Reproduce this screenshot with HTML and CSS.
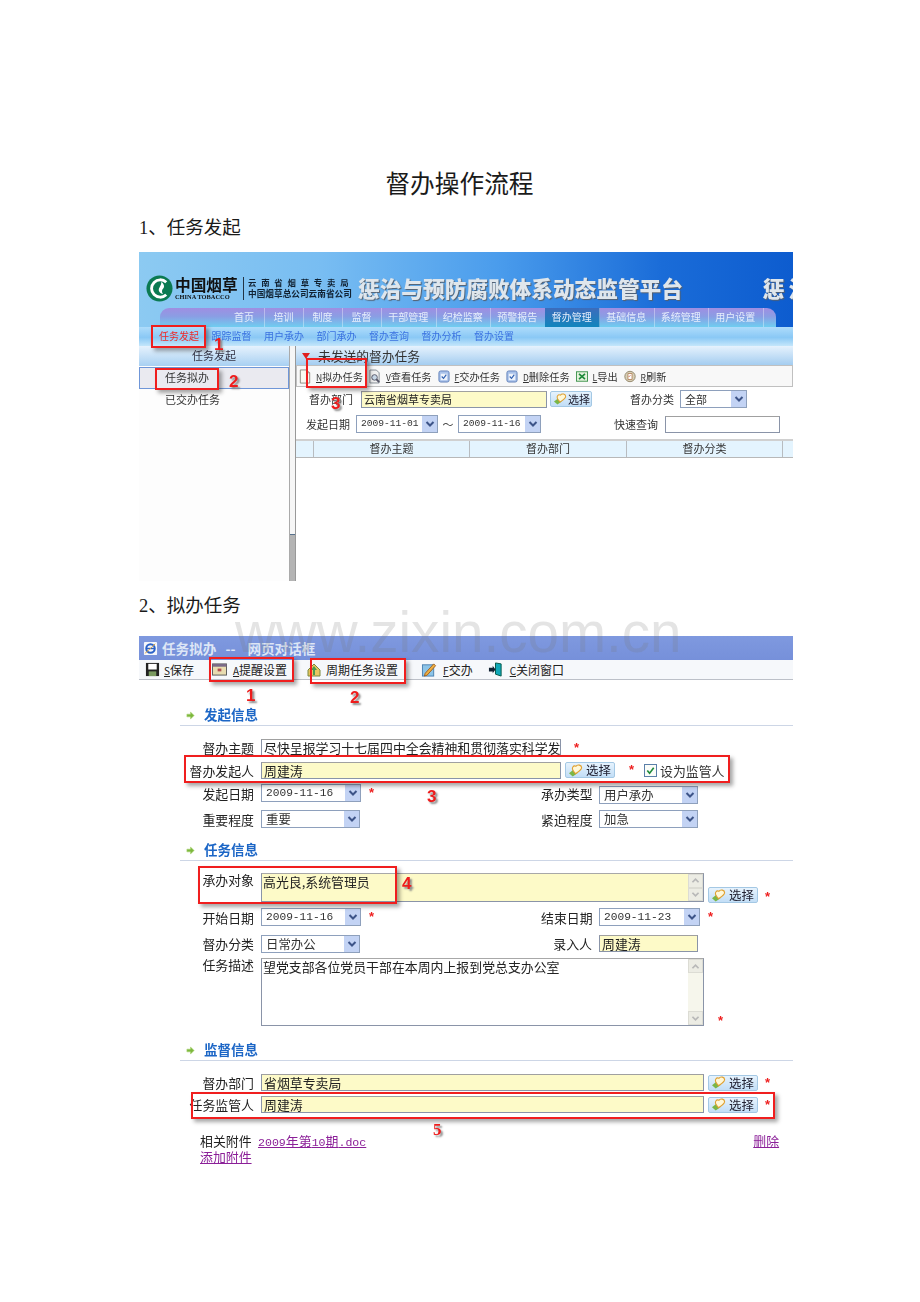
FILE: index.html
```html
<!DOCTYPE html>
<html lang="zh-CN">
<head>
<meta charset="utf-8">
<title>督办操作流程</title>
<link rel="stylesheet" href="styles.css">
</head>
<body>
<svg class="defs" width="0" height="0" aria-hidden="true">
  <symbol id="pick" viewBox="0 0 16 14"><path d="M1 10l5-4 4 4-5 3.500z" fill="#7ab648"/><path d="M6 8C3 4 6 1 8.500 2.500 10 0 15 1 14.500 4.500 14 7 10 9 8 10.500z" fill="#fff8d8" stroke="#e0a030" stroke-width="1.200"/></symbol>
  <symbol id="chev" viewBox="0 0 10 8"><path d="M1.500 2L5 5.500 8.500 2" fill="none" stroke="currentColor" stroke-width="2"/></symbol>
  <symbol id="doc" viewBox="0 0 12 16"><path d="M1 1h7l3 3v11H1z" fill="#fafaf2" stroke="#8a8a80"/><path d="M8 1v3h3" fill="#ddd" stroke="#8a8a80"/></symbol>
  <symbol id="view" viewBox="0 0 13 16"><path d="M1 1h7l3 3v11H1z" fill="#f0f0f0" stroke="#808890"/><circle cx="6" cy="9" r="3" fill="#c8d8e8" stroke="#556"/><path d="M8 11l3 3" stroke="#556" stroke-width="2"/></symbol>
  <symbol id="task" viewBox="0 0 13 14"><rect x="1" y="1" width="11" height="12" rx="2" fill="#a9c2ea" stroke="#5f7fb8"/><rect x="3" y="4" width="7" height="7" fill="#eef3fb"/><path d="M4 7l2 2 3-4" fill="none" stroke="#3060b0" stroke-width="1.200"/></symbol>
  <symbol id="xls" viewBox="0 0 14 14"><rect x=".5" y="1.500" width="13" height="11" fill="#e4f2dc" stroke="#2e8b3e"/><path d="M3.500 4l7 6M10.500 4l-7 6" stroke="#1e8a3a" stroke-width="2"/></symbol>
  <symbol id="ref" viewBox="0 0 15 15"><circle cx="7.500" cy="7.500" r="6.500" fill="#d8d0b8" stroke="#87795a"/><rect x="5" y="4" width="5" height="7" fill="#fff" stroke="#a06030" stroke-width=".8"/><path d="M6 8l2-2" stroke="#c04020"/></symbol>
  <symbol id="arrow" viewBox="0 0 10 10"><path d="M5 1l4 4-4 4V6.500H1v-3h4z" fill="#7cb83c" stroke="#a8d070" stroke-width=".6"/></symbol>
</svg>

<main class="doc">
  <h1 class="doc-title">督办操作流程</h1>
  <h2 class="step">1、任务发起</h2>

  <section class="shot shot-a">
    <header class="brand">
      <div class="brand-top">
        <svg class="logo" viewBox="0 0 28 28"><circle cx="14" cy="14" r="13.500" fill="#0b7a52"/><path d="M21 7.500A9 9 0 1 0 21 20.500" fill="none" stroke="#fff" stroke-width="3"/><path d="M16 7c4 4 3 6 1 8-1 2 0 4 1 5-4-1-6-4-4-7 1-2 2-4 2-6z" fill="#fff"/></svg>
        <div class="logo-cn">
          <div class="logo-big">中国烟草</div>
          <div class="logo-en">CHINA TOBACCO</div>
        </div>
        <div class="logo-sub">
          <div class="logo-l1">云南省烟草专卖局</div>
          <div class="logo-l2">中国烟草总公司云南省公司</div>
        </div>
        <div class="sys-title">惩治与预防腐败体系动态监管平台</div>
        <div class="sys-title sys-repeat">惩治</div>
      </div>
      <nav class="nav">
        <a class="nav-i nav-first">首页</a><a class="nav-i nav-s">培训</a><a class="nav-i nav-s">制度</a><a class="nav-i nav-s">监督</a><a class="nav-i">干部管理</a><a class="nav-i">纪检监察</a><a class="nav-i">预警报告</a><a class="nav-i nav-on">督办管理</a><a class="nav-i">基础信息</a><a class="nav-i">系统管理</a><a class="nav-i">用户设置</a>
      </nav>
    </header>
    <div class="subnav"><a class="sub-on">任务发起</a><a>跟踪监督</a><a>用户承办</a><a>部门承办</a><a>督办查询</a><a>督办分析</a><a>督办设置</a></div>
    <div class="split">
      <aside class="side">
        <div class="side-head">任务发起</div>
        <div class="side-item side-sel">任务拟办</div>
        <div class="side-item">已交办任务</div>
      </aside>
      <div class="splitter"><div class="split-grip"></div></div>
      <div class="pane">
        <div class="pane-head"><span class="tri"></span>未发送的督办任务</div>
        <div class="tools">
          <svg class="ti"><use href="#doc"/></svg><span class="tt"><u>N</u>拟办任务</span>
          <svg class="ti"><use href="#view"/></svg><span class="tt"><u>V</u>查看任务</span>
          <svg class="ti"><use href="#task"/></svg><span class="tt"><u>F</u>交办任务</span>
          <svg class="ti"><use href="#task"/></svg><span class="tt"><u>D</u>删除任务</span>
          <svg class="ti"><use href="#xls"/></svg><span class="tt"><u>L</u>导出</span>
          <svg class="ti"><use href="#ref"/></svg><span class="tt"><u>R</u>刷新</span>
        </div>
        <div class="filter f1">
          <span class="flabel">督办部门</span>
          <div class="inp yellow f-dept">云南省烟草专卖局</div>
          <button class="pick pick-s"><svg class="pick-ic"><use href="#pick"/></svg>选择</button>
          <span class="flabel f-cat">督办分类</span>
          <div class="sel f-catsel"><span class="val">全部</span><span class="arr"><svg><use href="#chev"/></svg></span></div>
        </div>
        <div class="filter f2">
          <span class="flabel">发起日期</span>
          <div class="sel f-date"><span class="val mono">2009-11-01</span><span class="arr"><svg><use href="#chev"/></svg></span></div>
          <span class="tilde">～</span>
          <div class="sel f-date2"><span class="val mono">2009-11-16</span><span class="arr"><svg><use href="#chev"/></svg></span></div>
          <span class="flabel f-quick">快速查询</span>
          <div class="inp f-qinp"></div>
        </div>
        <div class="thead"><span></span><span>督办主题</span><span>督办部门</span><span>督办分类</span><span></span></div>
      </div>
    </div>
    <div class="mark b1"></div><div class="mark b2"></div><div class="mark b3"></div>
    <span class="num n1">1</span><span class="num n2">2</span><span class="num n3">3</span>
  </section>

  <h2 class="step">2、拟办任务</h2>

  <section class="shot shot-b">
    <div class="win-title">
      <svg class="ie" viewBox="0 0 16 16"><rect x="1" y="1" width="14" height="14" rx="1" fill="#f4f6fb"/><circle cx="8" cy="8" r="4.500" fill="none" stroke="#2a62c8" stroke-width="2.200"/><path d="M4 8h8" stroke="#2a62c8" stroke-width="1.500"/><path d="M2 13c2-1 8-7 11-10" stroke="#e0a030" fill="none"/></svg>
      <span class="win-t1">任务拟办</span><span class="win-t2">--</span><span>网页对话框</span>
    </div>
    <div class="bar">
      <svg class="bi bi-save" viewBox="0 0 16 16"><rect x="1" y="1" width="14" height="14" fill="#222"/><rect x="3.500" y="2" width="9" height="6" fill="#fff"/><rect x="4" y="10" width="8" height="5" fill="#7a9a60"/></svg><span class="bt"><u>S</u>保存</span>
      <svg class="bi bi-cal" viewBox="0 0 16 14"><rect x=".5" y="1" width="15" height="12" fill="#e8dcb0" stroke="#555"/><rect x=".5" y="1" width="15" height="3" fill="#7a6a88"/><rect x="6" y="6" width="4" height="3" fill="#b05050"/></svg><span class="bt"><u>A</u>提醒设置</span>
      <svg class="bi bi-home" viewBox="0 0 14 14"><path d="M1 7l6-6 6 6v6H1z" fill="#e8c860" stroke="#7a8a40"/><path d="M7 3l3 4H8v5H6V7H4z" fill="#4a9a50"/></svg><span class="bt">周期任务设置</span>
      <svg class="bi bi-pen" viewBox="0 0 16 16"><rect x="1" y="3" width="12" height="12" fill="#8cc4e8" stroke="#4a80b0"/><path d="M4 12l9-10 2 2-9 10-3 1z" fill="#f0b040" stroke="#a06020"/></svg><span class="bt"><u>F</u>交办</span>
      <svg class="bi bi-exit" viewBox="0 0 16 16"><path d="M8 1l6 1v13l-6-2z" fill="#0fa8b8" stroke="#054"/><path d="M1 6h4V4l3 4-3 4v-2H1z" fill="#123"/></svg><span class="bt"><u>C</u>关闭窗口</span>
    </div>

    <div class="sect sect1"><svg class="sect-ic"><use href="#arrow"/></svg>发起信息</div>
    <div class="row r1">
      <label class="lab">督办主题</label>
      <div class="inp w300 plain">尽快呈报学习十七届四中全会精神和贯彻落实科学发</div><span class="star s1">*</span>
    </div>
    <div class="row r2">
      <label class="lab">督办发起人</label>
      <div class="inp yellow w300">周建涛</div>
      <button class="pick p-near"><svg class="pick-ic"><use href="#pick"/></svg>选择</button><span class="star s2">*</span>
      <span class="check"><svg viewBox="0 0 12 12"><path d="M2.500 6l2.500 3 4.500-6" fill="none" stroke="#1e8a3a" stroke-width="1.800"/></svg></span><span class="chk-t">设为监管人</span>
    </div>
    <div class="row r3">
      <label class="lab">发起日期</label>
      <div class="cell">
        <div class="sel w100"><span class="val mono">2009-11-16</span><span class="arr"><svg><use href="#chev"/></svg></span></div><span class="star s3">*</span>
      </div>
      <label class="rlab">承办类型</label>
      <div class="sel w99 low"><span class="val">用户承办</span><span class="arr"><svg><use href="#chev"/></svg></span></div>
    </div>
    <div class="row r4">
      <label class="lab">重要程度</label>
      <div class="cell"><div class="sel w99"><span class="val">重要</span><span class="arr"><svg><use href="#chev"/></svg></span></div></div>
      <label class="rlab">紧迫程度</label>
      <div class="sel w99"><span class="val">加急</span><span class="arr"><svg><use href="#chev"/></svg></span></div>
    </div>

    <div class="sect sect2"><svg class="sect-ic"><use href="#arrow"/></svg>任务信息</div>
    <div class="row r5">
      <label class="lab lab-top">承办对象</label>
      <div class="area yellow a-short"><span class="area-t">高光良,系统管理员</span><div class="sb"><span class="sb-b"><svg class="up"><use href="#chev"/></svg></span><span class="sb-b"><svg><use href="#chev"/></svg></span></div></div>
      <button class="pick p-area"><svg class="pick-ic"><use href="#pick"/></svg>选择</button><span class="star s4">*</span>
    </div>
    <div class="row r6">
      <label class="lab">开始日期</label>
      <div class="cell"><div class="sel w100"><span class="val mono">2009-11-16</span><span class="arr"><svg><use href="#chev"/></svg></span></div><span class="star s3">*</span></div>
      <label class="rlab">结束日期</label>
      <div class="sel w101"><span class="val mono">2009-11-23</span><span class="arr"><svg><use href="#chev"/></svg></span></div><span class="star s3">*</span>
    </div>
    <div class="row r7">
      <label class="lab">督办分类</label>
      <div class="cell"><div class="sel w99"><span class="val">日常办公</span><span class="arr"><svg><use href="#chev"/></svg></span></div></div>
      <label class="rlab">录入人</label>
      <div class="inp yellow w99i">周建涛</div>
    </div>
    <div class="row r8">
      <label class="lab lab-desc">任务描述</label>
      <div class="area a-tall"><span class="area-t">望党支部各位党员干部在本周内上报到党总支办公室</span><div class="sb"><span class="sb-b"><svg class="up"><use href="#chev"/></svg></span><span class="sb-b"><svg><use href="#chev"/></svg></span></div></div>
      <span class="star s5">*</span>
    </div>

    <div class="sect sect3"><svg class="sect-ic"><use href="#arrow"/></svg>监督信息</div>
    <div class="row r9">
      <label class="lab">督办部门</label>
      <div class="inp yellow w443">省烟草专卖局</div>
      <button class="pick p-near"><svg class="pick-ic"><use href="#pick"/></svg>选择</button><span class="star s6">*</span>
    </div>
    <div class="row r10">
      <label class="lab">任务监管人</label>
      <div class="inp yellow w443">周建涛</div>
      <button class="pick p-near"><svg class="pick-ic"><use href="#pick"/></svg>选择</button><span class="star s6">*</span>
    </div>
    <div class="row r11">
      <label class="att-lab">相关附件</label>
      <a class="link att-file"><span class="mono-l">2009</span>年第<span class="mono-l">10</span>期<span class="mono-l">.doc</span></a>
      <a class="link att-del">删除</a>
    </div>
    <div class="row r12"><a class="link att-add">添加附件</a></div>

    <div class="mark c1"></div><div class="mark c2"></div><div class="mark c3"></div><div class="mark c4"></div><div class="mark c5"></div>
    <span class="num m1">1</span><span class="num m2">2</span><span class="num m3">3</span><span class="num m4">4</span><span class="num m5">5</span>
    <div class="watermark">www.zixin.com.cn</div>
  </section>
</main>
</body>
</html>
```

FILE: styles.css
```css
* { box-sizing: border-box; }
html, body { margin: 0; padding: 0; background: #fff; }
body { font-family: "Noto Sans CJK SC", "Liberation Sans", sans-serif; color: #222; height: 1302px; overflow: hidden; }
.defs { position: absolute; }
u { text-decoration: underline; }

.doc { width: 654px; margin-left: 139px; padding-top: 167px; }
.doc-title { margin: 0 0 19px; padding-right: 13px; font-size: 24.7px; line-height: 30px; font-weight: 400; text-align: center; color: #1a1a1a; }
.step { margin: 0 0 12px; font-size: 18.5px; line-height: 24px; height: 24px; font-weight: 400; color: #1a1a1a; font-family: "Liberation Serif", "Noto Sans CJK SC", serif; }

.shot { position: relative; width: 654px; filter: blur(.45px); }
.shot-a { height: 329px; margin-bottom: 13px; display: flex; flex-direction: column; overflow: hidden; font-size: 11px; background: #fdfdfd; }
.shot-b { margin-top: 18px; height: 530px; font-size: 12.9px; }

/* brand */
.brand { height: 75px; flex: none; background: linear-gradient(90deg, #8ccaf2 0, #78bdf2 28%, #4a9cec 55%, #1a6cd8 80%, #0d5ccf 100%); display: flex; flex-direction: column; justify-content: flex-end; }
.brand-top { height: 56px; padding: 22px 0 0 7px; display: flex; align-items: flex-start; overflow: hidden; }
.logo { width: 27px; height: 29px; flex: none; }
.logo-cn { width: 69px; margin-left: 2px; padding-right: 5px; border-right: 1px solid #234; height: 23px; margin-top: 3px; flex: none; }
.logo-big { font-size: 15.7px; line-height: 16px; font-weight: 700; color: #111; white-space: nowrap; }
.logo-en { font-family: "Liberation Serif", serif; font-size: 6.4px; line-height: 8px; font-weight: 700; color: #111; white-space: nowrap; }
.logo-sub { margin-left: 4px; width: 110px; flex: none; margin-top: 3px; }
.logo-l1 { font-size: 8.4px; line-height: 11px; letter-spacing: 4.8px; font-weight: 700; color: #123; white-space: nowrap; }
.logo-l2 { font-size: 8.67px; line-height: 11px; font-weight: 700; color: #123; white-space: nowrap; }
.sys-title { font-size: 21.67px; line-height: 28px; font-weight: 900; color: #dfe6ec; text-shadow: 1px 1px 1px #55606e; white-space: nowrap; flex: none; }
.sys-repeat { margin-left: 80px; letter-spacing: 4px; }

.nav { height: 19px; margin: 0 17px 0 21px; border-radius: 9px 9px 0 0; background: linear-gradient(180deg, #9f8ee2 0, #8a9ee4 45%, #6fcdf0 100%); display: flex; padding-left: 68px; flex: none; }
.nav-i { font-size: 10px; line-height: 18px; color: #e6eefc; padding: 0 7.25px; white-space: nowrap; border-right: 1px solid rgba(255,255,255,.35); margin-right: -1px; }
.nav-first { padding: 0 10px 0 6px; }
.nav-s { padding: 0 9.5px; }
.nav-on { background: linear-gradient(180deg, #3c6cbc, #1286bd); }

.subnav { height: 19px; flex: none; background: linear-gradient(180deg, #aedcfb, #8ac8f5 55%, #c4e6fb); padding-left: 20px; display: flex; gap: 12.5px; font-size: 10px; line-height: 18px; color: #3a72e0; }
.sub-on { color: #ee2a2a; }

/* split layout */
.split { flex: 1; display: flex; min-height: 0; }
.side { width: 150px; flex: none; background: #fdfdfd; font-size: 11px; }
.side-head { height: 20px; line-height: 18px; text-align: center; background: linear-gradient(180deg, #e6f2fd, #a8d0f2); color: #334; }
.side-item { height: 22px; line-height: 19px; padding-left: 25px; color: #333; border: 1px solid transparent; }
.side-sel { margin-top: 1px; background: #eaeaf0; border-color: #6f96d8; }
.splitter { width: 7px; flex: none; background: #f6f6f6; border-left: 1px solid #aaa; border-right: 1px solid #999; display: flex; flex-direction: column; justify-content: flex-end; }
.split-grip { height: 47px; background: #b4b4b4; border-top: 1px solid #56708c; }
.pane { flex: 1; background: #fff; min-width: 0; }
.pane-head { height: 19px; line-height: 18px; font-size: 12.75px; color: #333; background: linear-gradient(180deg, #e6f2fd, #a4cdf0); display: flex; align-items: center; padding-left: 6px; }
.tri { width: 0; height: 0; border: 4px solid transparent; border-top: 6px solid #e02020; border-bottom: 0; margin-right: 8px; }
.tools { height: 22px; border: 1px solid #c0c0c0; background: #f8f8f8; display: flex; align-items: center; padding-left: 2px; }
.ti { width: 12px; height: 15px; flex: none; }
.tt { font-size: 10.2px; margin: 0 6px 0 5px; white-space: nowrap; color: #333; }
.tt u { font-size: 8.5px; }
.filter { display: flex; align-items: center; height: 18px; }
.f1 { margin-top: 3px; padding-left: 13px; }
.f2 { margin-top: 7px; padding-left: 10px; }
.flabel { font-size: 11px; color: #333; white-space: nowrap; width: 44px; flex: none; }
.f-dept { margin-left: 8px; width: 186px; font-size: 11px; line-height: 15px; }
.pick.pick-s { width: 42px; height: 16px; margin-left: 3px; font-size: 11px; }
.pick-s .pick-ic { width: 14px; height: 12px; margin-right: 1px; }
.f-cat { margin-left: 38px; }
.f-catsel { margin-left: 6px; width: 67px; }
.f-date { margin-left: 6px; width: 82px; }
.tilde { width: 20px; text-align: center; font-size: 11px; color: #444; flex: none; }
.f-date2 { width: 83px; }
.shot-a .mono { font-size: 9.6px; }
.shot-a .val { font-size: 11px; }
.shot-a .val.mono { font-size: 9.6px; }
.f-quick { margin-left: 73px; }
.f-qinp { margin-left: 7px; width: 115px; height: 16px; background: #fff; }
.thead { margin-top: 6px; height: 19px; display: grid; grid-template-columns: 18px 156px 157px 156px 1fr; background: #e4f4fe; border-top: 2px solid #d0d0d0; border-bottom: 1px solid #b8b8b8; font-size: 11px; color: #333; text-align: center; line-height: 15px; }
.thead span { border-right: 1px solid #b8bcc0; }
.thead span:last-child { border-right: 0; }

/* form controls */
.inp { border: 1px solid #8a94a8; border-top-color: #a0a0a0; background: #fff; height: 17px; padding-left: 2px; line-height: 15px; white-space: nowrap; overflow: hidden; color: #222; flex: none; }
.yellow { background: #fdfac8; }
.sel { display: flex; align-items: stretch; height: 18px; border: 1px solid #8ea0bc; background: #fff; flex: none; }
.val { flex: 1; padding-left: 4px; line-height: 16px; white-space: nowrap; overflow: hidden; font-size: 12.4px; color: #333; }
.mono { font-family: "Liberation Mono", monospace; font-size: 11.2px; padding-left: 4px; }
.arr { width: 15px; flex: none; background: #c3d3f4; color: #3d5488; display: flex; align-items: center; justify-content: center; }
.arr svg { width: 10px; height: 8px; }
.pick { width: 50px; height: 16px; padding: 0 0 0 2px; border: 1px solid #a4c8e4; border-radius: 2px; background: linear-gradient(180deg, #e6f3fd, #c2def6); font: inherit; font-size: 12.4px; line-height: 14px; color: #223; display: flex; align-items: center; flex: none; white-space: nowrap; }
.pick-ic { width: 15px; height: 13px; margin-right: 3px; flex: none; }
.star { color: #ee2020; font-family: "Liberation Sans", sans-serif; font-size: 13px; line-height: 12px; flex: none; font-weight: 700; }

/* dialog */
.win-title { height: 24px; background: linear-gradient(180deg, #7f99df, #7690da); display: flex; align-items: center; padding-left: 4px; font-size: 13.6px; font-weight: 700; color: #dde6f6; }
.ie { width: 15px; height: 15px; margin-right: 4px; flex: none; }
.win-t2 { margin: 0 12px 0 9px; }
.bar { height: 20px; background: #f6f8fb; border-bottom: 1px solid #bcc0c8; display: flex; align-items: center; padding-left: 6px; font-size: 12px; }
.bar u { font-size: 10px; }
.bi { flex: none; height: 15px; }
.bi-save { width: 15px; }
.bi-cal { width: 15px; margin-left: 18px; height: 13px; }
.bi-home { width: 14px; margin-left: 20px; height: 14px; }
.bi-pen { width: 16px; margin-left: 23px; }
.bi-exit { width: 15px; margin-left: 15px; }
.bt { margin-left: 4px; white-space: nowrap; color: #222; }
.bi-cal + .bt { margin-left: 6px; }
.bi-home + .bt { margin-left: 5px; }
.bi-pen + .bt { margin-left: 6px; }
.bi-exit + .bt { margin-left: 7px; }

.sect { height: 21px; margin-left: 41px; border-bottom: 1px solid #cdd6e6; display: flex; align-items: flex-start; line-height: 18px; font-size: 13.5px; font-weight: 700; color: #1c66c6; padding-left: 6px; }
.sect-ic { width: 9px; height: 9px; margin: 6px 9px 0 0; flex: none; }
.sect1 { margin-top: 25px; }
.sect2 { margin-top: 5px; }
.sect3 { margin-top: 14px; }

.row { display: flex; align-items: center; color: #222; }
.lab { width: 115px; margin-right: 7px; text-align: right; white-space: nowrap; flex: none; }
.rlab { width: 51px; margin-right: 7px; text-align: right; white-space: nowrap; flex: none; }
.cell { width: 280px; display: flex; align-items: center; flex: none; }
.r1 { height: 19px; margin-top: 12px; }
.r2 { height: 26px; }
.r3 { height: 20px; }
.r4 { height: 32px; }
.r5 { height: 31px; margin-top: 12px; align-items: flex-start; }
.r6 { height: 26px; }
.r7 { height: 27px; }
.r8 { height: 68px; margin-top: 1px; align-items: flex-start; }
.r9 { height: 19px; margin-top: 12px; }
.r10 { height: 25px; }
.r11 { height: 18px; margin-top: 14px; }
.r12 { height: 15px; }
.lab-top { line-height: 14px; }
.lab-desc { line-height: 14px; }

.w300 { width: 300px; }
.w443 { width: 443px; }
.w100 { width: 100px; }
.w99 { width: 99px; }
.w101 { width: 101px; }
.w99i { width: 99px; }
.low { margin-top: 4px; }
.p-near { margin-left: 4px; }
.p-area { margin: 14px 0 0 4px; }
.s1 { margin-left: 13px; }
.s2 { margin-left: 14px; }
.s3 { margin-left: 8px; }
.s4 { margin: 18px 0 0 7px; }
.s5 { margin: 57px 0 0 14px; }
.s6 { margin-left: 7px; }
.check { width: 13px; height: 13px; border: 1px solid #5a7fa8; background: #fafcf8; margin-left: 10px; display: block; flex: none; }
.check svg { display: block; width: 11px; height: 11px; }
.chk-t { margin-left: 3px; white-space: nowrap; color: #333; }

.area { position: relative; width: 443px; border: 1px solid #8a94a8; border-top-color: #a8a8a8; padding: 0 0 0 1px; white-space: nowrap; line-height: 15px; color: #222; flex: none; background: #fff; }
.a-short { height: 29px; background: #fdfac8; }
.a-tall { height: 68px; }
.area-t { display: block; }
.sb { position: absolute; right: 0; top: 0; bottom: 0; width: 15px; background: #f6f6ec; display: flex; flex-direction: column; justify-content: space-between; }
.sb-b { height: 14px; background: #ecece4; border: 1px solid #dcdcd4; display: flex; align-items: center; justify-content: center; color: #b8b8b8; }
.sb-b svg { width: 9px; height: 7px; }
.sb-b .up { transform: rotate(180deg); }

.att-lab { width: 51px; margin-left: 61px; white-space: nowrap; color: #222; flex: none; }
.link { color: #8b1f98; text-decoration: underline; white-space: nowrap; }
.att-file { margin-left: 7px; }
.mono-l { font-family: "Liberation Mono", monospace; font-size: 11.6px; }
.att-del { margin-left: 387px; }
.att-add { margin-left: 61px; }

/* annotations laid over the screenshots */
.mark { position: absolute; border: 2px solid #f01e1e; box-shadow: 3px 3px 4px rgba(0,0,0,.35); }
.num { position: absolute; color: #ee1c1c; font-family: "Liberation Sans", sans-serif; font-weight: 700; font-size: 17px; line-height: 17px; text-shadow: 2px 2px 2px #888; }
.b1 { left: 12px; top: 73px; width: 55px; height: 23px; }
.b2 { left: 16px; top: 116px; width: 64px; height: 22px; }
.b3 { left: 167px; top: 106px; width: 61px; height: 30px; }
.n1 { left: 75px; top: 84px; }
.n2 { left: 90px; top: 121px; }
.n3 { left: 192px; top: 143px; }
.c1 { left: 70px; top: 21px; width: 85px; height: 25px; }
.c2 { left: 171px; top: 22px; width: 96px; height: 26px; }
.c3 { left: 45px; top: 119px; width: 546px; height: 28px; }
.c4 { left: 59px; top: 230px; width: 199px; height: 38px; }
.c5 { left: 52px; top: 456px; width: 584px; height: 27px; }
.m1 { left: 107px; top: 51px; }
.m2 { left: 211px; top: 53px; }
.m3 { left: 288px; top: 152px; }
.m4 { left: 263px; top: 239px; }
.m5 { left: 294px; top: 485px; font-family: "Liberation Serif", serif; }
.watermark { position: absolute; left: 96px; top: -31px; font-family: "Liberation Sans", sans-serif; font-size: 56.6px; line-height: 1; color: rgba(120,120,120,.2); white-space: nowrap; }
```
